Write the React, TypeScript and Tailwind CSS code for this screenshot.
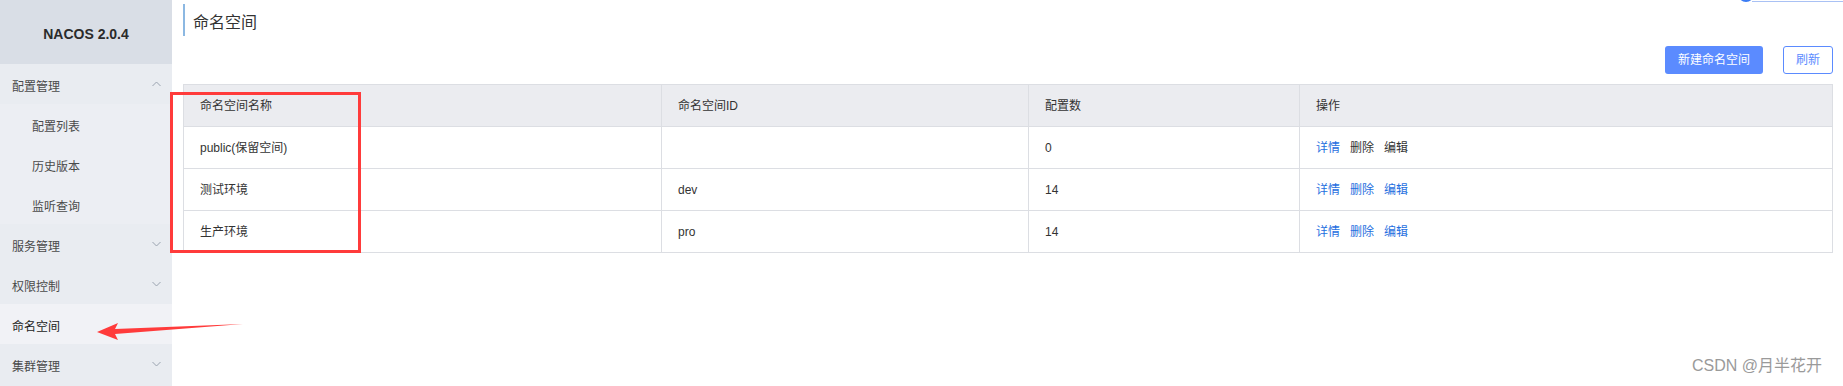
const font = {
  fontFamily: '"Liberation Sans", "Noto Sans CJK SC", sans-serif',
};

type MenuItem = {
  label: string;
  sub?: boolean;
  chevron?: "up" | "down";
  active?: boolean;
};

const menu: MenuItem[] = [
  { label: "配置管理", chevron: "up" },
  { label: "配置列表", sub: true },
  { label: "历史版本", sub: true },
  { label: "监听查询", sub: true },
  { label: "服务管理", chevron: "down" },
  { label: "权限控制", chevron: "down" },
  { label: "命名空间", active: true },
  { label: "集群管理", chevron: "down" },
];

const rows = [
  { name: "public(保留空间)", id: "", count: "0", reserved: true },
  { name: "测试环境", id: "dev", count: "14", reserved: false },
  { name: "生产环境", id: "pro", count: "14", reserved: false },
];

function Chevron({ dir }: { dir: "up" | "down" }) {
  return (
    <svg width="9" height="6" viewBox="0 0 9 6" className="absolute right-[11px] top-[17px]">
      <polyline
        points={dir === "up" ? "0.5,5 4.5,1 8.5,5" : "0.5,1 4.5,5 8.5,1"}
        fill="none"
        stroke="#9aa3b0"
        strokeWidth="1"
      />
    </svg>
  );
}

function Sidebar() {
  return (
    <div className="w-[172px] shrink-0 bg-[#e9ecf1] h-full">
      <div className="h-[64px] bg-[#d9dee6] flex items-center justify-center pt-[4px] text-[14px] font-bold text-[#2b2b2b]">
        NACOS 2.0.4
      </div>
      {menu.map((m) => (
        <div
          key={m.label}
          className={`relative h-[40px] flex items-center pt-[6px] text-[12px] ${
            m.sub ? "pl-[32px] bg-[#eceef3] text-[#4a4a4a]" : "pl-[12px] text-[#4a4a4a]"
          } ${m.active ? "bg-[#f1f2f6] text-[#222]" : ""}`}
        >
          {m.label}
          {m.chevron && <Chevron dir={m.chevron} />}
        </div>
      ))}
    </div>
  );
}

function Actions({ reserved }: { reserved: boolean }) {
  return (
    <div className="flex gap-[10px]">
      <span className="text-[#1f6fe0]">详情</span>
      <span className={reserved ? "text-[#333]" : "text-[#1f6fe0]"}>删除</span>
      <span className={reserved ? "text-[#333]" : "text-[#1f6fe0]"}>编辑</span>
    </div>
  );
}

export default function App() {
  return (
    <div className="relative w-[1843px] h-[386px] overflow-hidden bg-white flex" style={font}>
      <Sidebar />

      <div className="flex-1 px-[11px]">
        <div className="mt-[4px] h-[32px] border-l-2 border-[#8cb8e2] pl-[8px] pt-[6px] flex items-center text-[16px] text-[#333]">
          命名空间
        </div>

        <div className="mt-[10px] flex justify-end gap-[20px]">
          <button className="w-[98px] h-[28px] rounded-[3px] bg-[#5b8bff] text-white text-[12px]">
            新建命名空间
          </button>
          <button className="w-[50px] h-[28px] rounded-[3px] border border-[#5b8bff] bg-white text-[#5b8bff] text-[12px]">
            刷新
          </button>
        </div>

        <table className="mt-[10px] w-[1649px] table-fixed border-collapse text-[12px] text-[#333]">
          <colgroup>
            <col className="w-[478px]" />
            <col className="w-[367px]" />
            <col className="w-[271px]" />
            <col className="w-[533px]" />
          </colgroup>
          <thead>
            <tr className="h-[42px] bg-[#ebecf0]">
              {["命名空间名称", "命名空间ID", "配置数", "操作"].map((h) => (
                <th key={h} className="border border-[#dcdee3] pl-[16px] text-left font-normal">
                  {h}
                </th>
              ))}
            </tr>
          </thead>
          <tbody>
            {rows.map((r) => (
              <tr key={r.name} className="h-[42px]">
                <td className="border border-[#dcdee3] pl-[16px]">{r.name}</td>
                <td className="border border-[#dcdee3] pl-[16px]">{r.id}</td>
                <td className="border border-[#dcdee3] pl-[16px]">{r.count}</td>
                <td className="border border-[#dcdee3] pl-[16px]">
                  <Actions reserved={r.reserved} />
                </td>
              </tr>
            ))}
          </tbody>
        </table>
      </div>

      {/* partial toggle cut off at the top right */}
      <div className="absolute left-[1738px] top-[-14px] w-[16px] h-[16px] rounded-full bg-[#3a7cf4]" />
      <div className="absolute left-[1752px] top-[1px] w-[91px] h-px bg-[#a9c1f4]" />

      {/* annotation box */}
      <div className="absolute left-[170px] top-[92px] w-[191px] h-[161px] border-[3px] border-[#ff3b3b]" />

      {/* annotation arrow */}
      <svg className="absolute left-0 top-0" width="260" height="386" viewBox="0 0 260 386">
        <polygon points="97,332 118,323 115,329 243,324 115,334 118,340" fill="#ff3b3b" />
      </svg>

      <div className="absolute left-[1692px] top-[358px] text-[16px] text-[#9a9a9a] leading-none">
        CSDN @月半花开
      </div>
    </div>
  );
}
